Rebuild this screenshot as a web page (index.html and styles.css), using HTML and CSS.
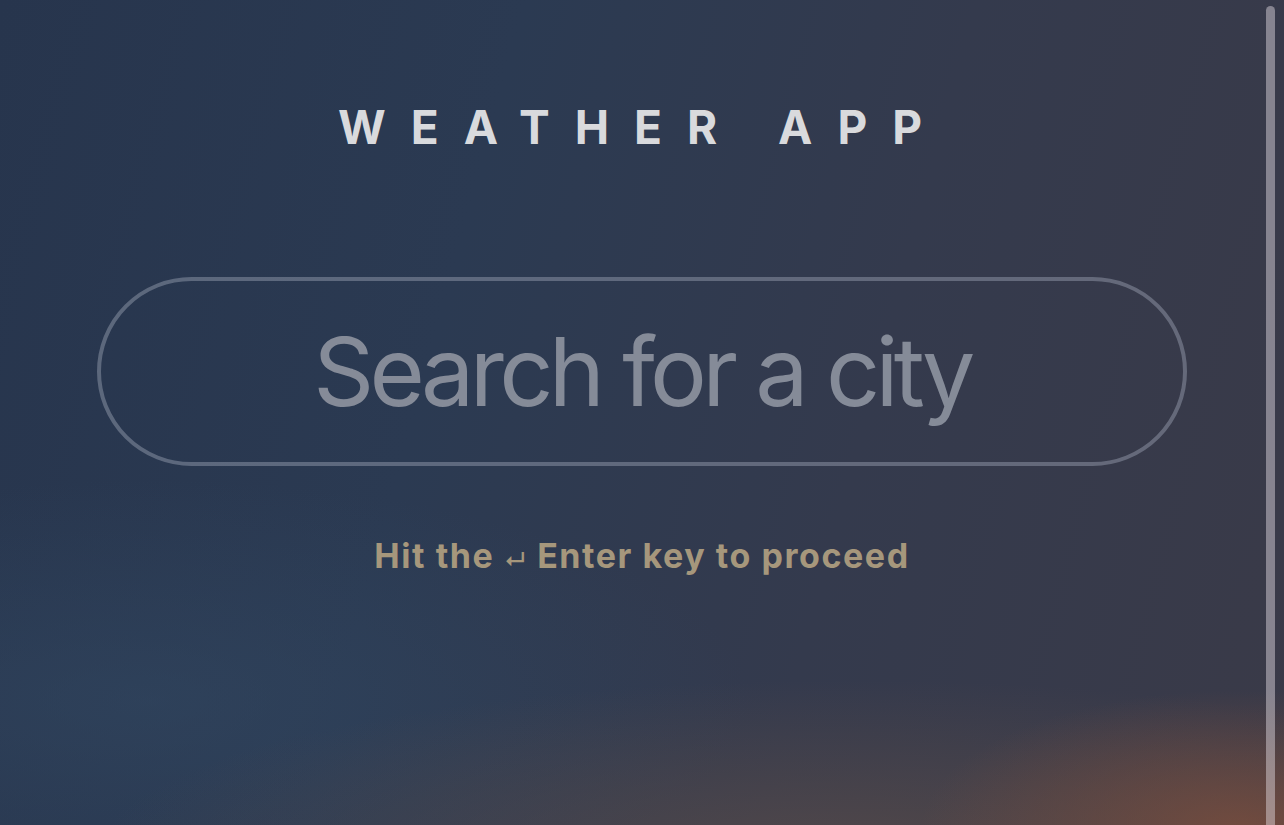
FILE: index.html
```html
<!DOCTYPE html>
<html lang="en">
<head>
<meta charset="utf-8">
<title>Weather App</title>
<link rel="stylesheet" href="styles.css">
</head>
<body>
<main class="page">
  <h1 class="title">WEATHER APP</h1>
  <form class="search" onsubmit="return false">
    <input class="search-input" type="text" placeholder="Search for a city">
  </form>
  <p class="hint">Hit the <span class="hint-key">↵</span> Enter key to proceed</p>
</main>
<div class="scrollbar"></div>
</body>
</html>
```
FILE: styles.css
```css
html, body {
  margin: 0;
  padding: 0;
  height: 100%;
  overflow: hidden;
}

body {
  font-family: Inter, "Noto Sans", "Liberation Sans", sans-serif;
  background:
    radial-gradient(ellipse 320px 140px at 1240px 830px, rgba(125, 78, 60, 0.8), rgba(125, 78, 60, 0) 100%),
    radial-gradient(ellipse 750px 170px at 850px 850px, rgba(95, 78, 72, 0.65), rgba(95, 78, 72, 0) 100%),
    radial-gradient(ellipse 600px 220px at 150px 700px, rgba(50, 72, 98, 0.55), rgba(50, 72, 98, 0) 100%),
    linear-gradient(105deg, #27354d 0%, #2b3a52 35%, #343a4d 65%, #3a3a48 100%);
  position: relative;
}

.page {
  display: flex;
  flex-direction: column;
  align-items: center;
  padding-top: 104px;
}

.title {
  margin: 0;
  font-size: 46px;
  line-height: 46px;
  font-weight: 700;
  letter-spacing: 25px;
  padding-left: 1px;
  color: #d9dadd;
}

.search {
  margin: 127px 0 0;
  width: 1090px;
  height: 189px;
  box-sizing: border-box;
  border: 4px solid rgba(165, 172, 188, 0.42);
  border-radius: 95px;
  display: flex;
  align-items: center;
}

.search-input {
  width: 100%;
  background: transparent;
  border: none;
  outline: none;
  text-align: center;
  font-family: Inter, "Noto Sans", "Liberation Sans", sans-serif;
  font-size: 95px;
  font-weight: 400;
  letter-spacing: -4.7px;
  color: #c6cad3;
  padding: 0;
}

.search-input::placeholder {
  color: #858b98;
  opacity: 1;
}

.hint {
  margin: 70px 0 0;
  font-size: 34px;
  line-height: 40px;
  font-weight: 700;
  letter-spacing: 1.55px;
  color: #a6977c;
}

.hint-key {
  font-size: 22px;
  font-weight: 600;
}

.scrollbar {
  position: absolute;
  top: 6px;
  right: 9px;
  width: 9px;
  height: 830px;
  border-radius: 5px;
  background: rgba(230, 225, 230, 0.45);
}
```
